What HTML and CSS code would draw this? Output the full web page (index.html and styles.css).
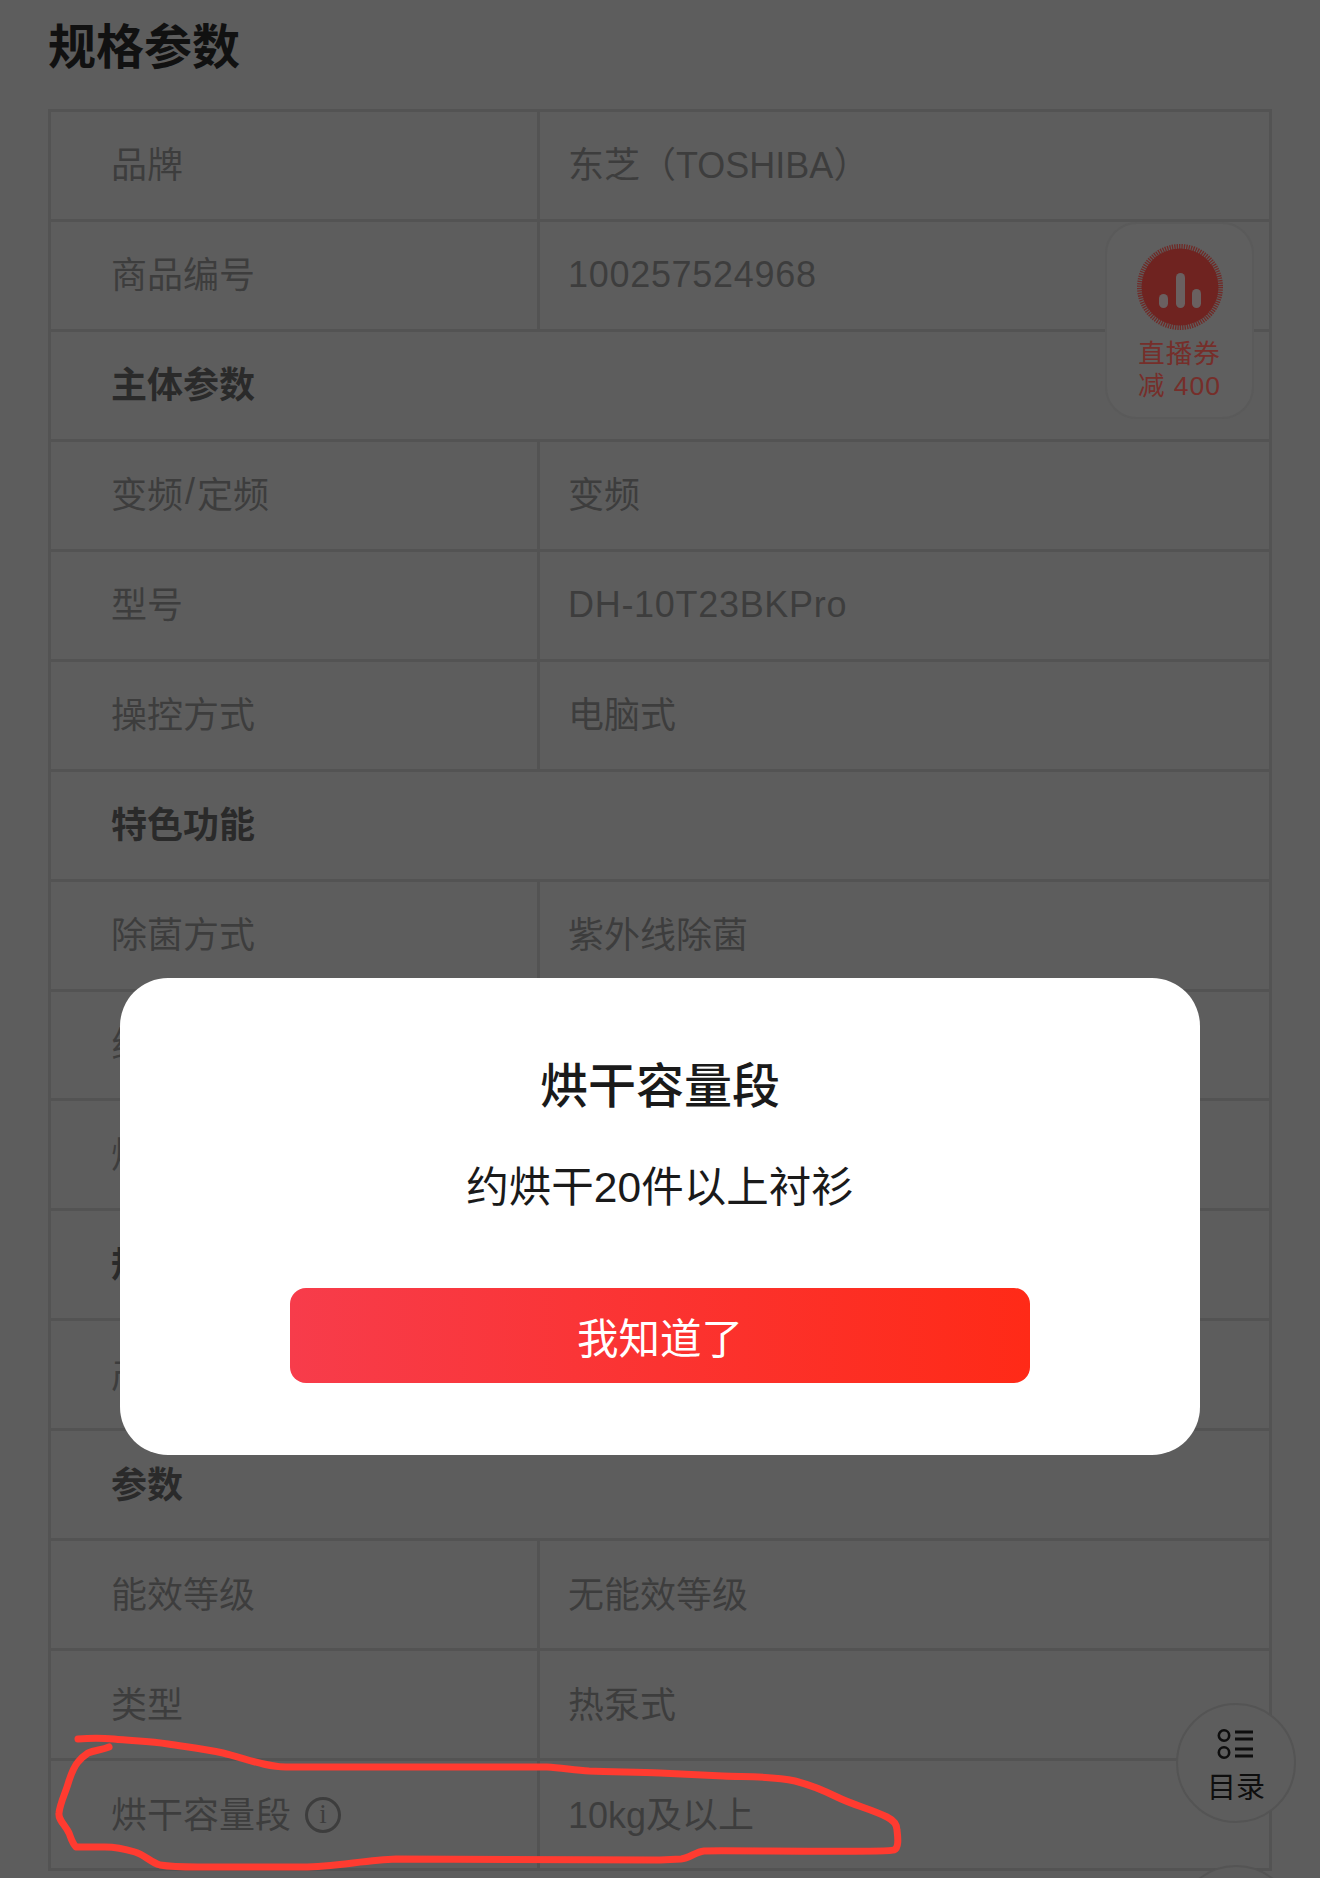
FILE: index.html
```html
<!DOCTYPE html>
<html lang="zh-CN">
<head>
    <meta charset="UTF-8">
    <meta name="viewport" content="width=device-width, initial-scale=1.0">
    <title>规格参数</title>
    <link rel="stylesheet" href="styles.css">
</head>
<body>
<div class="screen">
    <div class="page">
        <h2 class="title">规格参数</h2>

        <div class="spec-table">
            <div class="row"><div class="label">品牌</div><div class="value">东芝（TOSHIBA）</div></div>
            <div class="row"><div class="label">商品编号</div><div class="value latin">100257524968</div></div>
            <div class="row group">主体参数</div>
            <div class="row"><div class="label">变频<span class="slash">/</span>定频</div><div class="value">变频</div></div>
            <div class="row"><div class="label">型号</div><div class="value latin">DH-10T23BKPro</div></div>
            <div class="row"><div class="label">操控方式</div><div class="value">电脑式</div></div>
            <div class="row group">特色功能</div>
            <div class="row"><div class="label">除菌方式</div><div class="value">紫外线除菌</div></div>
            <!-- 下面几行被弹窗挡住，只露出第一个字的左边 -->
            <div class="row"><div class="label">线</div><div class="value"></div></div>
            <div class="row"><div class="label">烘</div><div class="value"></div></div>
            <div class="row group">规</div>
            <div class="row"><div class="label">产</div><div class="value"></div></div>
            <div class="row group">参数</div>
            <div class="row"><div class="label">能效等级</div><div class="value">无能效等级</div></div>
            <div class="row"><div class="label">类型</div><div class="value">热泵式</div></div>
            <div class="row">
                <div class="label">烘干容量段<span class="info">i</span></div>
                <div class="value">10kg及以上</div>
            </div>
        </div>
    </div>

    <!-- 直播券 -->
    <div class="live-coupon">
        <div class="live-icon">
            <svg width="90" height="90" viewBox="0 0 90 90">
                <circle cx="45" cy="45" r="40.5" fill="none" stroke="#702a27" stroke-width="5" stroke-dasharray="1.3 1.1"/>
                <circle cx="45" cy="45" r="38.5" fill="#6f2320"/>
                <rect x="24" y="52" width="9" height="14" rx="4.5" fill="#6a6060"/>
                <rect x="41" y="31" width="9" height="35" rx="4.5" fill="#6a6060"/>
                <rect x="57" y="47" width="9" height="19" rx="4.5" fill="#6a6060"/>
            </svg>
        </div>
        <div class="live-text">直播券<br>减 400</div>
    </div>

    <!-- 目录 -->
    <div class="catalog">
        <svg width="38" height="32" viewBox="0 0 38 32">
            <circle cx="7" cy="7.5" r="5.2" fill="none" stroke="#0e0e0e" stroke-width="2.6"/>
            <circle cx="7" cy="24.5" r="5.2" fill="none" stroke="#0e0e0e" stroke-width="2.6"/>
            <path d="M18 4h18M18 11h18M18 21h18M18 28h18" stroke="#0e0e0e" stroke-width="3"/>
        </svg>
        <span class="catalog-text">目录</span>
    </div>
    <div class="catalog-next"></div>

    <!-- 弹窗 -->
    <div class="modal">
        <h3 class="modal-title">烘干容量段</h3>
        <p class="modal-text">约烘干20件以上衬衫</p>
        <button class="modal-btn">我知道了</button>
    </div>

    <!-- 手绘红圈 -->
    <svg class="scribble" width="1320" height="1878" viewBox="0 0 1320 1878">
        <path d="M78 1739 C90 1738 102 1738 114 1739 C132 1741 150 1741 168 1744 C187 1747 205 1749 223 1753 C244 1758 265 1767 286 1767 L547 1767 C561 1768 575 1770 589 1771 C612 1772 636 1772 660 1773 C681 1774 702 1775 723 1776 C747 1777 772 1776 795 1781 C811 1785 823 1790 837 1797 C853 1805 871 1809 887 1817 C895 1821 897 1825 897 1830 C898 1838 899 1848 894 1850 C887 1853 720 1850 704 1851 C695 1852 690 1858 681 1859 L660 1860 L396 1859 C365 1860 334 1867 303 1867 L198 1867 C185 1867 172 1867 160 1865 C150 1862 145 1855 135 1852 C125 1849 115 1847 105 1847 L76 1847 C72 1843 71 1838 69 1833 C66 1826 58 1820 59 1813 C60 1804 64 1796 67 1787 C70 1778 72 1769 78 1762 C82 1757 85 1755 88 1753 C95 1750 102 1750 109 1747" fill="none" stroke="#ff3b30" stroke-width="7" stroke-linecap="round" stroke-linejoin="round"/>
    </svg>
</div>
</body>
</html>
```

FILE: styles.css
```css
* {
    margin: 0;
    padding: 0;
    box-sizing: border-box;
}

body {
    background: #5d5d5d;
    font-family: "Liberation Sans", "Noto Sans CJK SC", sans-serif;
}

.screen {
    position: relative;
    width: 1320px;
    height: 1878px;
    overflow: hidden;
}

.page {
    padding: 0 48px;
}

.title {
    height: 109px;
    padding-top: 16px;
    font-size: 48px;
    line-height: 64px;
    font-weight: 700;
    color: #111;
}

.spec-table {
    border: 3px solid #535353;
    border-bottom: 0;
    width: 1224px;
}

.row {
    display: flex;
    height: 109.94px;
    border-bottom: 3px solid #535353;
    align-items: stretch;
    font-size: 36px;
    color: #3d3d3d;
}

.group {
    align-items: center;
    padding-left: 60px;
    padding-bottom: 6px;
    font-weight: 700;
    color: #2a2a2a;
}

.label {
    display: flex;
    align-items: center;
    width: 489px;
    padding-left: 60px;
    padding-bottom: 6px;
    border-right: 3px solid #535353;
}

.slash {
    padding: 0 2px;
}

.value {
    display: flex;
    align-items: center;
    flex: 1;
    padding-left: 28px;
    padding-bottom: 6px;
}

/* 纯数字/字母的行 */
.latin {
    padding-bottom: 0;
    letter-spacing: 0.7px;
}

.info {
    display: inline-block;
    width: 36px;
    height: 36px;
    margin-left: 14px;
    margin-top: 6px;
    border: 3px solid #3d3d3d;
    border-radius: 50%;
    text-align: center;
    font-family: "Liberation Serif", serif;
    font-size: 27px;
    line-height: 29px;
}

.live-coupon {
    position: absolute;
    left: 1105px;
    top: 222px;
    width: 149px;
    height: 197px;
    background: #5f5f5f;
    border: 2px solid #5a5a5a;
    border-radius: 32px;
    text-align: center;
}

.live-icon {
    height: 95px;
    padding-top: 18px;
}

.live-text {
    margin-top: 19px;
    font-size: 26.5px;
    line-height: 32px;
    color: #762e2a;
    letter-spacing: 1px;
}

.catalog {
    position: absolute;
    left: 1176px;
    top: 1703px;
    width: 120px;
    height: 120px;
    background: #5d5d5d;
    border: 2px solid #545454;
    border-radius: 50%;
    display: flex;
    flex-direction: column;
    align-items: center;
    padding-top: 23px;
}

.catalog-text {
    margin-top: 9px;
    font-size: 29px;
    line-height: 38px;
    color: #0e0e0e;
}

.catalog-next {
    position: absolute;
    left: 1176px;
    top: 1865px;
    width: 120px;
    height: 120px;
    background: #5d5d5d;
    border: 2px solid #545454;
    border-radius: 50%;
}

.modal {
    position: absolute;
    left: 120px;
    top: 978px;
    width: 1080px;
    height: 477px;
    background: #fff;
    border-radius: 48px;
    text-align: center;
}

.modal-title {
    margin-top: 76px;
    font-size: 48px;
    line-height: 66px;
    font-weight: 500;
    color: #1a1a1a;
}

.modal-text {
    margin-top: 39px;
    font-size: 42.5px;
    line-height: 58px;
    color: #1a1a1a;
}

.modal-btn {
    display: block;
    width: 740px;
    height: 95px;
    margin: 71px auto 0;
    border: none;
    border-radius: 16px;
    background: linear-gradient(90deg, #f73c4b 0%, #ff2a17 100%);
    color: #fff;
    font-family: inherit;
    font-size: 41.5px;
}

.scribble {
    position: absolute;
    left: 0;
    top: 0;
    pointer-events: none;
}
```
